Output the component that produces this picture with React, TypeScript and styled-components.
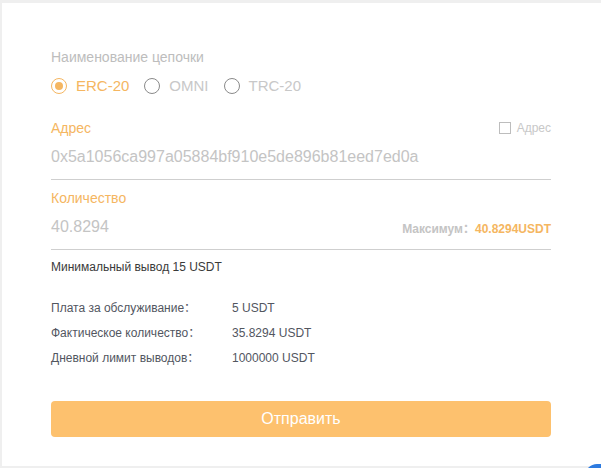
import React, { useState } from "react"
import styled, { createGlobalStyle } from "styled-components"

const GlobalStyle = createGlobalStyle`
    html, body {
        margin: 0;
        padding: 0;
        background: #efefef;
        font-family: "Liberation Sans", "Noto Sans CJK SC", Arial, sans-serif;
    }
`

const chains = ["ERC-20", "OMNI", "TRC-20"]

const fees = [
    { label: "Плата за обслуживание：", value: "5 USDT" },
    { label: "Фактическое количество：", value: "35.8294 USDT" },
    { label: "Дневной лимит выводов：", value: "1000000 USDT" },
]

export default function App() {
    const [chain, setChain] = useState("ERC-20")

    return (
        <>
            <GlobalStyle />
            <Page>
                <Card>
                    <ChainLabel>Наименование цепочки</ChainLabel>
                    <RadioRow>
                        {chains.map((c) => (
                            <RadioItem key={c} $active={chain === c} onClick={() => setChain(c)}>
                                <RadioCircle $active={chain === c} />
                                {c}
                            </RadioItem>
                        ))}
                    </RadioRow>

                    <Field>
                        <FieldHead>
                            <FieldLabel>Адрес</FieldLabel>
                            <CheckLabel>
                                <CheckBox />
                                Адрес
                            </CheckLabel>
                        </FieldHead>
                        <InputRow>
                            <Value>0x5a1056ca997a05884bf910e5de896b81eed7ed0a</Value>
                        </InputRow>
                    </Field>

                    <Field>
                        <FieldHead>
                            <FieldLabel>Количество</FieldLabel>
                        </FieldHead>
                        <InputRow>
                            <Value>40.8294</Value>
                            <MaxText>
                                Максимум：<MaxAmount>40.8294USDT</MaxAmount>
                            </MaxText>
                        </InputRow>
                    </Field>

                    <MinNote>Минимальный вывод 15 USDT</MinNote>

                    <FeeList>
                        {fees.map((f) => (
                            <FeeRow key={f.label}>
                                <FeeLabel>{f.label}</FeeLabel>
                                <span>{f.value}</span>
                            </FeeRow>
                        ))}
                    </FeeList>

                    <SubmitButton>Отправить</SubmitButton>
                </Card>
                <Widget />
            </Page>
        </>
    )
}

const Page = styled.div`
    padding: 3px 0 2px 2px;
    position: relative;
    overflow: hidden;
    height: 468px;
    box-sizing: border-box;
`

const Card = styled.div`
    background: #fff;
    height: 463px;
    box-sizing: border-box;
    padding: 44px 50px 0 49px;
    display: flex;
    flex-direction: column;
`

const ChainLabel = styled.div`
    font-size: 14px;
    line-height: 20px;
    color: #bdbdbd;
`

const RadioRow = styled.div`
    display: flex;
    margin-top: 9px;
    height: 20px;
    align-items: center;
`

const RadioItem = styled.label<{ $active: boolean }>`
    display: flex;
    align-items: center;
    gap: 9px;
    margin-right: 15px;
    font-size: 15px;
    line-height: 20px;
    color: ${(p) => (p.$active ? "#f5b661" : "#c8c8c8")};
    cursor: pointer;
`

const RadioCircle = styled.span<{ $active: boolean }>`
    width: 16px;
    height: 16px;
    box-sizing: border-box;
    border-radius: 50%;
    border: 1px solid ${(p) => (p.$active ? "#f5b661" : "#8a8a8a")};
    display: flex;
    align-items: center;
    justify-content: center;

    &::after {
        content: "";
        width: 8px;
        height: 8px;
        border-radius: 50%;
        background: #f5b661;
        display: ${(p) => (p.$active ? "block" : "none")};
    }
`

const Field = styled.div`
    margin-top: 22px;
    border-bottom: 1px solid #cfcfcf;
    & + & {
        margin-top: 8px;
    }
`

const FieldHead = styled.div`
    display: flex;
    justify-content: space-between;
    align-items: center;
    height: 20px;
`

const FieldLabel = styled.div`
    font-size: 14px;
    line-height: 20px;
    color: #f5b661;
`

const CheckLabel = styled.div`
    display: flex;
    align-items: center;
    gap: 6px;
    font-size: 12px;
    color: #c8c8c8;
`

const CheckBox = styled.span`
    width: 12px;
    height: 12px;
    box-sizing: border-box;
    border: 1px solid #bdbdbd;
`

const InputRow = styled.div`
    display: flex;
    justify-content: space-between;
    align-items: center;
    margin-top: 7px;
    padding-bottom: 10px;
    height: 24px;
`

const Value = styled.div`
    font-size: 16px;
    line-height: 24px;
    color: #c4c4c4;
`

const MaxText = styled.div`
    font-size: 12px;
    font-weight: bold;
    color: #c4c4c4;
`

const MaxAmount = styled.span`
    color: #f5b661;
`

const MinNote = styled.div`
    margin-top: 9px;
    font-size: 12px;
    line-height: 16px;
    color: #3a3a3a;
`

const FeeList = styled.div`
    margin-top: 21px;
    display: flex;
    flex-direction: column;
`

const FeeRow = styled.div`
    display: flex;
    font-size: 12px;
    line-height: 25px;
    color: #52565f;
`

const FeeLabel = styled.span`
    width: 181px;
`

const SubmitButton = styled.button`
    margin-top: 30px;
    height: 36px;
    width: 100%;
    border: none;
    border-radius: 4px;
    background: #fdc16e;
    color: #fff;
    font-family: "Liberation Sans", Arial, sans-serif;
    font-size: 16px;
    cursor: pointer;
`

const Widget = styled.div`
    position: absolute;
    right: -14px;
    bottom: -20px;
    width: 30px;
    height: 24px;
    border-radius: 12px;
    background: #2d7be0;
`
